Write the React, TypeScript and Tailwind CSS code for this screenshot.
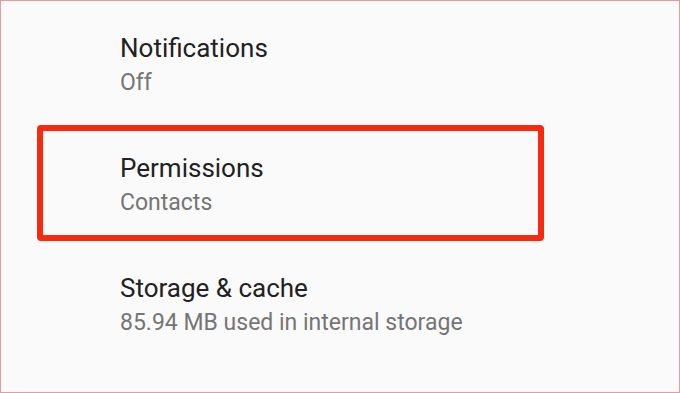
export default function App() {
  return (
    <div className="w-[680px] h-[393px] bg-[#fafafa] border border-[#e59aa0] font-['Roboto',sans-serif] overflow-hidden">
      {/* Notifications */}
      <div className="pl-[119px] pt-[31px] pb-[29px]">
        <div className="text-[26px] leading-[32px] text-[#212121]">Notifications</div>
        <div className="mt-[5px] text-[23px] leading-[27px] text-[#757575]">Off</div>
      </div>

      {/* Permissions, highlighted */}
      <div className="ml-[36px] w-[507px] border-[6px] border-[#f7290f] rounded-[4px] pl-[77px] pt-[21px] pb-[19px]">
        <div className="text-[26px] leading-[32px] text-[#212121]">Permissions</div>
        <div className="mt-[5px] text-[23px] leading-[27px] text-[#757575]">Contacts</div>
      </div>

      {/* Storage */}
      <div className="pl-[119px] pt-[31px]">
        <div className="text-[26px] leading-[32px] text-[#212121]">Storage &amp; cache</div>
        <div className="mt-[5px] text-[23px] leading-[27px] text-[#757575]">85.94 MB used in internal storage</div>
      </div>
    </div>
  );
}
